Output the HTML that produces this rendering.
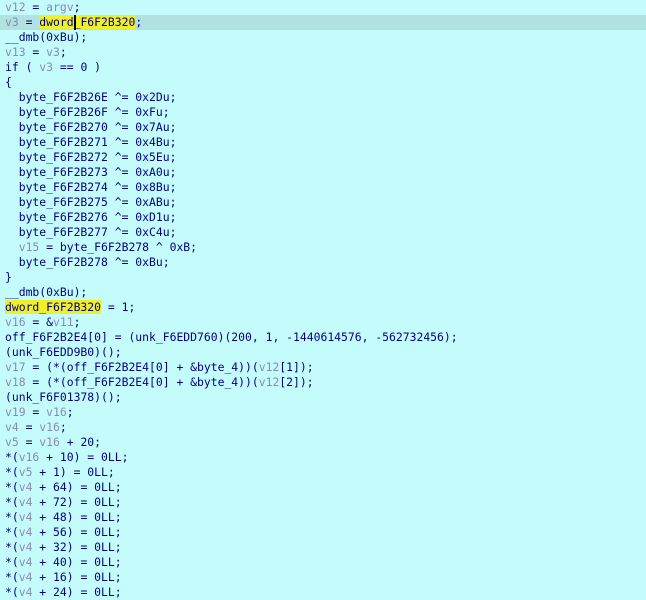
<!DOCTYPE html>
<html><head><meta charset="utf-8"><style>
html,body{margin:0;padding:0;}
body{width:646px;height:593px;overflow:hidden;background:#c4fcfc;}
pre{margin:0;padding:0 0 0 5px;font-family:"DejaVu Sans Mono","Liberation Mono",monospace;font-size:11.4px;line-height:15px;color:#000080;}
.l{display:block;height:15px;white-space:pre;}
.hl{background:#b0e2e2;margin-left:-5px;padding-left:5px;}
.v{color:#8a8ab4;}
.y{background:#f0f02a;}
.c{display:inline-block;width:2px;height:15px;background:#000;vertical-align:top;margin-right:-2px;}
</style></head><body><pre><span class="l"><span class="v">v12</span> = <span class="v">argv</span>;</span><span class="l hl"><span class="v">v3</span> = <span class="y">dword<span class="c"></span>_F6F2B320</span>;</span><span class="l">__dmb(0xBu);</span><span class="l"><span class="v">v13</span> = <span class="v">v3</span>;</span><span class="l">if ( <span class="v">v3</span> == 0 )</span><span class="l">{</span><span class="l">  byte_F6F2B26E ^= 0x2Du;</span><span class="l">  byte_F6F2B26F ^= 0xFu;</span><span class="l">  byte_F6F2B270 ^= 0x7Au;</span><span class="l">  byte_F6F2B271 ^= 0x4Bu;</span><span class="l">  byte_F6F2B272 ^= 0x5Eu;</span><span class="l">  byte_F6F2B273 ^= 0xA0u;</span><span class="l">  byte_F6F2B274 ^= 0x8Bu;</span><span class="l">  byte_F6F2B275 ^= 0xABu;</span><span class="l">  byte_F6F2B276 ^= 0xD1u;</span><span class="l">  byte_F6F2B277 ^= 0xC4u;</span><span class="l">  <span class="v">v15</span> = byte_F6F2B278 ^ 0xB;</span><span class="l">  byte_F6F2B278 ^= 0xBu;</span><span class="l">}</span><span class="l">__dmb(0xBu);</span><span class="l"><span class="y">dword_F6F2B320</span> = 1;</span><span class="l"><span class="v">v16</span> = &amp;<span class="v">v11</span>;</span><span class="l">off_F6F2B2E4[0] = (unk_F6EDD760)(200, 1, -1440614576, -562732456);</span><span class="l">(unk_F6EDD9B0)();</span><span class="l"><span class="v">v17</span> = (*(off_F6F2B2E4[0] + &amp;byte_4))(<span class="v">v12</span>[1]);</span><span class="l"><span class="v">v18</span> = (*(off_F6F2B2E4[0] + &amp;byte_4))(<span class="v">v12</span>[2]);</span><span class="l">(unk_F6F01378)();</span><span class="l"><span class="v">v19</span> = <span class="v">v16</span>;</span><span class="l"><span class="v">v4</span> = <span class="v">v16</span>;</span><span class="l"><span class="v">v5</span> = <span class="v">v16</span> + 20;</span><span class="l">*(<span class="v">v16</span> + 10) = 0LL;</span><span class="l">*(<span class="v">v5</span> + 1) = 0LL;</span><span class="l">*(<span class="v">v4</span> + 64) = 0LL;</span><span class="l">*(<span class="v">v4</span> + 72) = 0LL;</span><span class="l">*(<span class="v">v4</span> + 48) = 0LL;</span><span class="l">*(<span class="v">v4</span> + 56) = 0LL;</span><span class="l">*(<span class="v">v4</span> + 32) = 0LL;</span><span class="l">*(<span class="v">v4</span> + 40) = 0LL;</span><span class="l">*(<span class="v">v4</span> + 16) = 0LL;</span><span class="l">*(<span class="v">v4</span> + 24) = 0LL;</span></pre></body></html>
